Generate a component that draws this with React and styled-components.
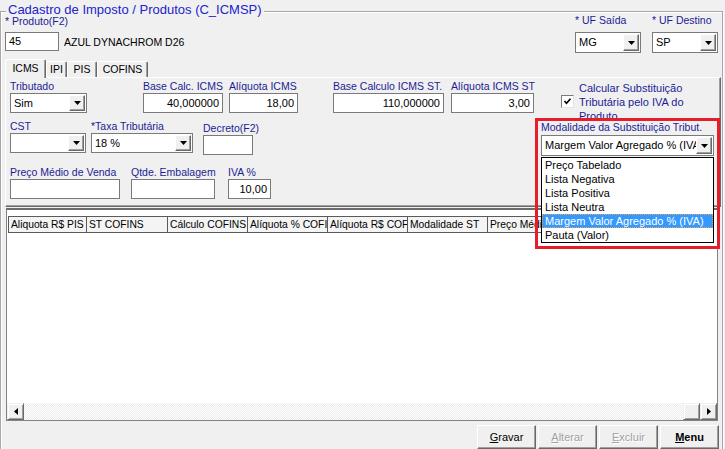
import React from "react";
import styled, { createGlobalStyle } from "styled-components";

const LABEL = "#1c1c94";

const GlobalStyle = createGlobalStyle`
  html, body {
    margin: 0;
    padding: 0;
    overflow: hidden;
    background: #f0f0f0;
  }
  body {
    font-family: "Liberation Sans", Arial, sans-serif;
    font-size: 10.5px;
    color: #000;
  }
  * {
    box-sizing: border-box;
  }
`;

const Window = styled.div`
  width: 725px;
  height: 449px;
  overflow: hidden;
  padding-top: 11px;
`;

const Group = styled.div`
  position: relative;
  margin-right: 2px;
  min-height: 470px;
  padding: 0 0 0 4px;
  border: 1px solid #a8a8a8;
  box-shadow: inset 1px 1px 0 #fff, 1px 1px 0 #fff;
`;

const Title = styled.div`
  width: fit-content;
  margin: -10px 0 0 1px;
  padding: 0 2px;
  background: #f0f0f0;
  color: #2222cc;
  font-size: 13px;
  line-height: 16px;
`;

const TopRow = styled.div`
  display: flex;
  justify-content: space-between;
  height: 37px;
  margin-top: -3px;
`;

const TopLabel = styled.div`
  color: ${LABEL};
  line-height: 13px;
  white-space: nowrap;
`;

const ProdLine = styled.div`
  display: flex;
  align-items: center;
  gap: 5px;
  margin-top: 4px;
`;

const ProdName = styled.span`
  white-space: nowrap;
`;

const UfGroup = styled.div`
  display: flex;
  gap: 11px;
  margin: -1px 4px 0 0;
`;

const UfField = styled.div`
  display: flex;
  flex-direction: column;
  gap: 5px;
  width: 66px;
`;

const TextBox = styled.div`
  width: ${(p) => (p.$w ? `${p.$w}px` : "100%")};
  height: ${(p) => p.$h || 20}px;
  padding: 0 3px;
  border: 1px solid #7a7a7a;
  background: #fff;
  font-size: 11px;
  line-height: ${(p) => (p.$h || 20) - 2}px;
  text-align: ${(p) => (p.$right ? "right" : "left")};
  white-space: nowrap;
  overflow: hidden;
`;

const ComboBox = styled.div`
  display: flex;
  width: 100%;
  height: ${(p) => p.$h || 20}px;
  padding: 1px;
  border: 1px solid #7a7a7a;
  background: #fff;
`;

const ComboText = styled.span`
  flex: 1;
  padding-left: 2px;
  font-size: 11px;
  line-height: ${(p) => (p.$h || 20) - 4}px;
  white-space: nowrap;
  overflow: hidden;
`;

const DropBtn = styled.span`
  display: flex;
  align-items: center;
  justify-content: center;
  width: 16px;
  background: #f0f0f0;
  border: 1px solid;
  border-color: #fff #696969 #696969 #fff;
  box-shadow: inset -1px -1px 0 #a0a0a0;
`;

const Arrow = ({ dir = "down" }) => {
  const pts = {
    down: "0,0 7,0 3.5,4",
    left: "4,0 4,7 0,3.5",
    right: "0,0 0,7 4,3.5",
  }[dir];
  const w = dir === "down" ? 7 : 4;
  const h = dir === "down" ? 4 : 7;
  return (
    <svg width={w} height={h} viewBox={`0 0 ${w} ${h}`}>
      <polygon points={pts} fill="#000" />
    </svg>
  );
};

const Combo = ({ value, h }) => (
  <ComboBox $h={h}>
    <ComboText $h={h}>{value}</ComboText>
    <DropBtn>
      <Arrow />
    </DropBtn>
  </ComboBox>
);

const TabStrip = styled.div`
  display: flex;
  align-items: flex-end;
  height: 18px;
  margin-top: 7px;
`;

const Tab = styled.div`
  position: relative;
  z-index: 1;
  width: ${(p) => p.$w}px;
  height: ${(p) => (p.$active ? 19 : 16)}px;
  margin-bottom: ${(p) => (p.$active ? -1 : 0)}px;
  border: 1px solid;
  border-bottom: none;
  border-color: #fff #696969 #fff #fff;
  border-radius: 2px 2px 0 0;
  box-shadow: inset -1px 0 0 #a0a0a0;
  background: #f0f0f0;
  text-align: center;
  line-height: ${(p) => (p.$active ? 16 : 14)}px;
`;

const Panel = styled.div`
  display: flex;
  height: 130px;
  margin-right: 1px;
  padding: 1px 6px 0 4px;
  border: 1px solid;
  border-color: #fff #696969 #696969 #fff;
  box-shadow: inset -1px -1px 0 #a0a0a0;
`;

const LeftArea = styled.div`
  display: flex;
  flex-direction: column;
`;

const Row = styled.div`
  display: flex;
  margin-top: ${(p) => p.$mt || 0}px;
`;

const Field = styled.div`
  display: flex;
  flex-direction: column;
  width: ${(p) => p.$w}px;
  margin-left: ${(p) => p.$ml || 0}px;
  margin-top: ${(p) => p.$dy || 0}px;
`;

const Label = styled.div`
  color: ${LABEL};
  line-height: 14px;
  white-space: nowrap;
`;

const RightCol = styled.div`
  display: flex;
  flex-direction: column;
  width: 173px;
  margin-left: auto;
`;

const CheckRow = styled.div`
  display: flex;
  align-items: flex-start;
  height: 38px;
  margin-top: 2px;
  padding-left: 20px;
  overflow: hidden;
`;

const CheckBox = styled.span`
  display: flex;
  align-items: center;
  justify-content: center;
  flex: none;
  width: 13px;
  height: 13px;
  margin-top: 14px;
  border: 1px solid;
  border-color: #7a7a7a #e3e3e3 #e3e3e3 #7a7a7a;
  background: #fff;
`;

const CheckText = styled.span`
  width: 112px;
  margin-left: 5px;
  color: ${LABEL};
  font-size: 11px;
  line-height: 14px;
`;

const ModalGroup = styled.div`
  position: relative;
  margin-top: 1px;
`;

const RedFrame = styled.div`
  position: absolute;
  z-index: 6;
  top: -2px;
  left: -6px;
  width: 185px;
  height: 131px;
  border: 3px solid #e61e2a;
  pointer-events: none;
`;

const ComboWrap = styled.div`
  margin-top: 1px;
`;

const DropList = styled.ul`
  position: absolute;
  z-index: 5;
  top: 37px;
  left: 0;
  width: 173px;
  margin: 0;
  padding: 0;
  list-style: none;
  border: 1px solid #000;
  background: #fff;
`;

const DropItem = styled.li`
  height: 14px;
  padding-left: 3px;
  font-size: 11px;
  line-height: 14px;
  white-space: nowrap;
  background: ${(p) => (p.$selected ? "#3399ff" : "#fff")};
  color: ${(p) => (p.$selected ? "#fff" : "#000")};
  outline: ${(p) => (p.$selected ? "1px dotted #f3a24a" : "none")};
  outline-offset: -1px;
`;

const Grid = styled.div`
  display: flex;
  flex-direction: column;
  height: 213px;
  margin: 1px 4px 0 1px;
  border: 1px solid #828282;
  border-top: 2px solid #6c6c6c;
  background: #fff;
`;

const HeadRow = styled.div`
  display: flex;
  margin: 6px 0 0 1px;
  border-left: 1px solid #5a5a5a;
  overflow: hidden;
`;

const HeadCell = styled.div`
  flex: none;
  width: ${(p) => p.$w}px;
  height: 17px;
  padding-left: 2px;
  border: 1px solid #5a5a5a;
  border-left: none;
  background: #f4f4f4;
  font-size: 10.3px;
  line-height: 15px;
  white-space: nowrap;
  overflow: hidden;
`;

const GridBody = styled.div`
  flex: 1;
`;

const HScroll = styled.div`
  display: flex;
  height: 17px;
`;

const ScrollBtn = styled.span`
  display: flex;
  align-items: center;
  justify-content: center;
  width: 17px;
  background: #f0f0f0;
  border: 1px solid;
  border-color: #f0f0f0 #696969 #696969 #f0f0f0;
  box-shadow: inset 1px 1px 0 #fff, inset -1px -1px 0 #a0a0a0;
`;

const Track = styled.span`
  flex: 1;
  background: repeating-conic-gradient(#fff 0 25%, #ececec 0 50%) 0 0 / 2px 2px;
`;

const ButtonBar = styled.div`
  display: flex;
  justify-content: flex-end;
  gap: 2px;
  margin: 4px 3px 0 0;
`;

const Button = styled.button`
  width: 59px;
  height: 24px;
  padding: 0;
  font: inherit;
  font-size: 11px;
  font-weight: ${(p) => (p.$bold ? 700 : 400)};
  color: ${(p) => (p.disabled ? "#a0a0a0" : "#000")};
  text-shadow: ${(p) => (p.disabled ? "1px 1px 0 #fff" : "none")};
  background: #f0f0f0;
  border: 1px solid;
  border-color: #fff #696969 #696969 #fff;
  box-shadow: inset -1px -1px 0 #a0a0a0;
`;

const headers = [
  ["Aliquota R$ PIS", 78],
  ["ST COFINS", 81],
  ["Cálculo COFINS", 80],
  ["Alíquota % COFINS", 80],
  ["Alíquota R$ COFINS", 80],
  ["Modalidade ST", 80],
  ["Preço Médio de Venda", 110],
  ["Qtde. Embalagem", 100],
];

const modalidades = [
  "Preço Tabelado",
  "Lista Negativa",
  "Lista Positiva",
  "Lista Neutra",
  "Margem Valor Agregado % (IVA)",
  "Pauta (Valor)",
];

export default function App() {
  return (
    <Window>
      <GlobalStyle />
      <Group>
        <Title>Cadastro de Imposto / Produtos (C_ICMSP)</Title>
        <TopRow>
          <div>
            <TopLabel>* Produto(F2)</TopLabel>
            <ProdLine>
              <TextBox $w={54} $h={19}>
                45
              </TextBox>
              <ProdName>AZUL DYNACHROM D26</ProdName>
            </ProdLine>
          </div>
          <UfGroup>
            <UfField>
              <TopLabel>* UF Saída</TopLabel>
              <Combo value="MG" h={21} />
            </UfField>
            <UfField>
              <TopLabel>* UF Destino</TopLabel>
              <Combo value="SP" h={21} />
            </UfField>
          </UfGroup>
        </TopRow>

        <TabStrip>
          <Tab $w={41} $active>
            ICMS
          </Tab>
          <Tab $w={21}>IPI</Tab>
          <Tab $w={30}>PIS</Tab>
          <Tab $w={51}>COFINS</Tab>
        </TabStrip>

        <Panel>
          <LeftArea>
            <Row>
              <Field $w={77}>
                <Label>Tributado</Label>
                <Combo value="Sim" />
              </Field>
              <Field $w={80} $ml={56}>
                <Label>Base Calc. ICMS</Label>
                <TextBox $right>40,000000</TextBox>
              </Field>
              <Field $w={69} $ml={6}>
                <Label>Alíquota ICMS</Label>
                <TextBox $right>18,00</TextBox>
              </Field>
              <Field $w={111} $ml={35}>
                <Label>Base Calculo ICMS ST.</Label>
                <TextBox $right>110,000000</TextBox>
              </Field>
              <Field $w={83} $ml={7}>
                <Label>Alíquota ICMS ST</Label>
                <TextBox $right>3,00</TextBox>
              </Field>
            </Row>
            <Row $mt={6}>
              <Field $w={76}>
                <Label>CST</Label>
                <Combo value="" />
              </Field>
              <Field $w={102} $ml={5}>
                <Label>*Taxa Tributária</Label>
                <Combo value="18 %" />
              </Field>
              <Field $w={50} $ml={10} $dy={2}>
                <Label>Decreto(F2)</Label>
                <TextBox />
              </Field>
            </Row>
            <Row $mt={10}>
              <Field $w={110}>
                <Label>Preço Médio de Venda</Label>
                <TextBox />
              </Field>
              <Field $w={84} $ml={11}>
                <Label>Qtde. Embalagem</Label>
                <TextBox />
              </Field>
              <Field $w={43} $ml={13}>
                <Label>IVA %</Label>
                <TextBox $right>10,00</TextBox>
              </Field>
            </Row>
          </LeftArea>

          <RightCol>
            <CheckRow>
              <CheckBox>
                <svg width="9" height="9" viewBox="0 0 9 9">
                  <polyline
                    points="1.5,4 3.5,6.2 7.5,1.8"
                    fill="none"
                    stroke="#000"
                    strokeWidth="1.7"
                  />
                </svg>
              </CheckBox>
              <CheckText>Calcular Substituição Tributária pelo IVA do Produto</CheckText>
            </CheckRow>
            <ModalGroup>
              <RedFrame />
              <Label>Modalidade da Substituição Tribut.</Label>
              <ComboWrap>
                <Combo value="Margem Valor Agregado % (IVA)" h={21} />
              </ComboWrap>
              <DropList>
                {modalidades.map((m) => (
                  <DropItem key={m} $selected={m.startsWith("Margem")}>
                    {m}
                  </DropItem>
                ))}
              </DropList>
            </ModalGroup>
          </RightCol>
        </Panel>

        <Grid>
          <HeadRow>
            {headers.map(([text, w]) => (
              <HeadCell key={text} $w={w}>
                {text}
              </HeadCell>
            ))}
          </HeadRow>
          <GridBody />
          <HScroll>
            <ScrollBtn>
              <Arrow dir="left" />
            </ScrollBtn>
            <Track />
            <ScrollBtn />
            <ScrollBtn>
              <Arrow dir="right" />
            </ScrollBtn>
          </HScroll>
        </Grid>

        <ButtonBar>
          <Button>
            <u>G</u>ravar
          </Button>
          <Button disabled>
            <u>A</u>lterar
          </Button>
          <Button disabled>
            <u>E</u>xcluir
          </Button>
          <Button $bold>
            <u>M</u>enu
          </Button>
        </ButtonBar>
      </Group>
    </Window>
  );
}
